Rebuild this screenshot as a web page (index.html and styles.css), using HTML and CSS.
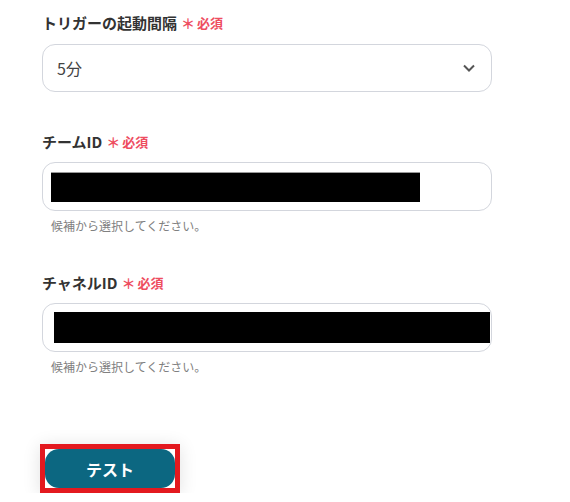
FILE: index.html
```html
<!DOCTYPE html>
<html lang="ja">
<head>
<meta charset="utf-8">
<link rel="stylesheet" href="styles.css">
</head>
<body>
<div class="form">
  <div class="field field-first">
    <div class="label">トリガーの起動間隔<span class="req"><span class="ast">＊</span>必須</span></div>
    <div class="box select">
      <span class="value">5分</span>
      <svg class="chev" width="12" height="8" viewBox="0 0 12 8"><polyline points="1,1.5 6,6.5 11,1.5" fill="none" stroke="#555" stroke-width="2"/></svg>
    </div>
  </div>
  <div class="field">
    <div class="label">チームID<span class="req"><span class="ast">＊</span>必須</span></div>
    <div class="box input">
      <div class="redact redact-a"></div>
    </div>
    <div class="help">候補から選択してください。</div>
  </div>
  <div class="field field-last">
    <div class="label">チャネルID<span class="req"><span class="ast">＊</span>必須</span></div>
    <div class="box input">
      <div class="redact redact-b"></div>
    </div>
    <div class="help">候補から選択してください。</div>
  </div>
  <div class="actions">
    <div class="highlight">
      <button class="btn">テスト</button>
    </div>
  </div>
</div>
</body>
</html>
```
FILE: styles.css
```css
html, body {
  margin: 0;
  padding: 0;
  background: #ffffff;
}
body {
  font-family: "Noto Sans CJK JP", "Noto Sans", sans-serif;
  color: #333333;
}
.form {
  padding: 13px 0 0 42px;
  width: 450px;
}
.field {
  margin-bottom: 39px;
}
.field-first {
  margin-bottom: 40px;
}
.field-last {
  margin-bottom: 0;
}
.label {
  font-size: 15px;
  font-weight: 700;
  line-height: 20px;
  height: 20px;
  color: #333333;
  display: flex;
  align-items: center;
}
.req {
  color: #ee4d5f;
  font-size: 13px;
  font-weight: 700;
  margin-left: 4px;
  display: flex;
  align-items: center;
}
.ast {
  font-size: 14px;
  margin-right: 2px;
}
.box {
  margin-top: 10px;
  height: 49px;
  box-sizing: border-box;
  border: 1px solid #d3d6dd;
  border-radius: 13px;
  display: flex;
  align-items: center;
}
.select {
  margin-top: 11px;
  height: 48px;
  justify-content: space-between;
  padding: 0 16px 0 14px;
}
.value {
  font-size: 16px;
  color: #444444;
}
.chev {
  display: block;
}
.input {
  padding: 0 0 0 8px;
}
.redact {
  background: #000000;
  height: 30px;
}
.redact-a {
  width: 369px;
  border-top: 1px solid #999;
  box-sizing: border-box;
}
.redact-b {
  width: 436px;
  height: 31px;
  margin-left: 3px;
}
.help {
  margin-top: 7px;
  padding-left: 9px;
  font-size: 12px;
  line-height: 16px;
  color: #808080;
}
.actions {
  margin-top: 69px;
  margin-left: -2px;
}
.highlight {
  display: inline-block;
  border: 5px solid #e3191f;
  box-shadow: 0 2px 18px rgba(0, 0, 0, 0.12);
  line-height: 0;
}
.btn {
  width: 130px;
  height: 39px;
  border: none;
  border-radius: 14px;
  background: #0c6781;
  color: #ffffff;
  font-family: "Noto Sans CJK JP", "Noto Sans", sans-serif;
  font-size: 16px;
  font-weight: 700;
  padding: 0;
  margin: 0;
}
```
